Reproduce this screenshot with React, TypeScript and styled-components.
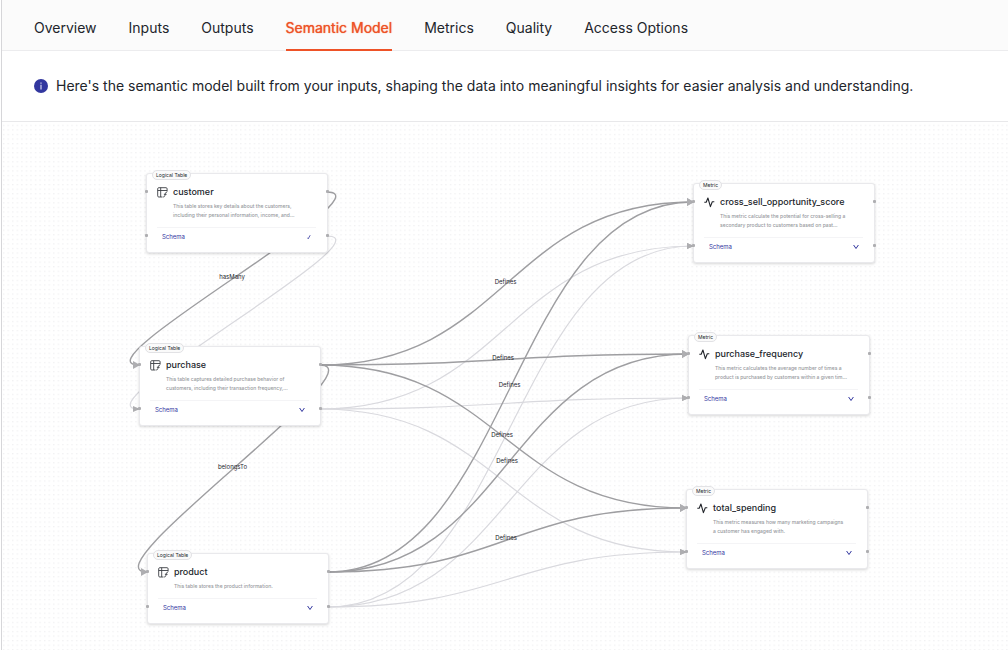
import React from "react";
import styled, { createGlobalStyle } from "styled-components";

const GlobalStyle = createGlobalStyle`
  *, *::before, *::after { box-sizing: border-box; }
  body {
    margin: 0;
    background: #fff;
    color: #22252b;
    font-family: Inter, "Liberation Sans", sans-serif;
  }
`;

const Page = styled.main`
  display: flex;
  flex-direction: column;
  min-height: 100vh;
  margin-left: 1px;
  border-left: 1px solid #d6d6d9;
`;

const TabBar = styled.nav`
  display: flex;
  gap: 32px;
  height: 51px;
  padding: 0 32px;
  background: #fbfbfb;
  border-bottom: 1px solid #ececee;
`;

const Tab = styled.a<{ $active?: boolean }>`
  display: flex;
  align-items: center;
  height: 51px;
  padding-top: 6px;
  border-bottom: 2px solid ${(p) => (p.$active ? "#ee5227" : "transparent")};
  color: ${(p) => (p.$active ? "#ee5227" : "#22252b")};
  font-size: 14px;
  line-height: 20px;
  text-decoration: none;
  text-shadow: ${(p) => (p.$active ? "0 0 1px currentColor" : "none")};
  white-space: nowrap;
`;

const Notice = styled.div`
  display: flex;
  align-items: center;
  gap: 8px;
  height: 71px;
  padding: 0 32px;
  border-bottom: 1px solid #e8e8ea;
  font-size: 14px;
  line-height: 20px;
`;

const NoticeText = styled.p`
  margin: 0;
`;

const Canvas = styled.section`
  position: relative;
  flex: 1;
  min-height: 528px;
  overflow: hidden;
`;

const Edges = styled.svg`
  position: absolute;
  top: 0;
  left: 0;
  width: 100%;
  height: 100%;
  fill: none;
`;

const EdgeText = styled.text`
  fill: #22252b;
  font-size: 6px;
  text-anchor: middle;
`;

const Card = styled.article`
  position: absolute;
  width: 182px;
  padding: 11px 10px 7px;
  background: #fff;
  border: 1px solid #e9e9ec;
  border-radius: 3px;
  box-shadow: 0 1px 3px rgba(0, 0, 0, 0.16);
`;

const Badge = styled.span`
  position: absolute;
  top: -4px;
  left: 5px;
  padding: 0 3px;
  background: #fafafa;
  border: 1px solid #e2e2e5;
  border-radius: 5px;
  color: #22252b;
  font-size: 5px;
  line-height: 8px;
  white-space: nowrap;
`;

const CardHeader = styled.header`
  display: flex;
  align-items: center;
  gap: 5px;
  height: 14px;
`;

const Title = styled.h2`
  margin: 0;
  font-size: 9px;
  font-weight: 500;
  line-height: 14px;
`;

const Description = styled.p`
  margin: 3px 0 7px 16px;
  color: #96989d;
  font-size: 5px;
  font-weight: 500;
  line-height: 9px;
  white-space: nowrap;
`;

const SchemaButton = styled.button`
  display: flex;
  align-items: center;
  justify-content: space-between;
  width: 159px;
  height: 18px;
  padding: 0 4px 0 5px;
  background: none;
  border: 0;
  border-top: 1px solid #f4f4f6;
  color: #32379f;
  font: inherit;
  font-size: 6px;
  line-height: 8px;
`;

const Handle = styled.i<{ $side: "left" | "right"; $row: "title" | "schema" }>`
  position: absolute;
  ${(p) => p.$side}: -2px;
  ${(p) => (p.$row === "title" ? "top: 16px" : "bottom: 15px")};
  width: 3px;
  height: 3px;
  background: #aeaeb1;
  border-radius: 1px;
`;

const InfoIcon = () => (
  <svg width="14" height="14" viewBox="0 0 14 14" aria-hidden="true">
    <circle cx="7" cy="7" r="7" fill="#32379f" />
    <path d="M7 5.800v4.700M7 3.500v1.300" stroke="#d5d6ee" strokeWidth="1.2" />
  </svg>
);

const TableIcon = () => (
  <svg width="11" height="11" viewBox="0 0 11 11" fill="none" stroke="#3b3e44" strokeWidth="0.9" aria-hidden="true">
    <path d="M5.500 10H1.800A1.100 1.100 0 0 1 .700 8.900V1.800A1.100 1.100 0 0 1 1.800.700H9A1.100 1.100 0 0 1 10.100 1.800V4.600M.700 3.500H10.100M3.700.700V10" />
    <path d="M9.900 5.400C8.600 5 8.400 6 8.200 7.200S7.600 10.300 6.200 10M6.900 7.300H9.600" />
  </svg>
);

const PulseIcon = () => (
  <svg width="11" height="11" viewBox="0 0 11 11" fill="none" stroke="#22252b" strokeWidth="1.1" strokeLinejoin="round" aria-hidden="true">
    <path d="M.300 5.200H2.200L3.900 1L6.400 9.600L8.300 4.800H10.300" />
  </svg>
);

const Chevron = () => (
  <svg width="6" height="6" viewBox="0 0 6 6" fill="none" stroke="#32379f" strokeWidth="1" aria-hidden="true">
    <path d="M.600 1L3 4.500L5.400 1" />
  </svg>
);

const Tick = () => (
  <svg width="6" height="6" viewBox="0 0 6 6" fill="none" stroke="#32379f" strokeWidth="0.8" aria-hidden="true">
    <path d="M1.600 3.800L2.200 4.800L4.200 1.200" />
  </svg>
);

type Kind = "Logical Table" | "Metric";
interface NodeData {
  id: string;
  kind: Kind;
  x: number;
  y: number;
  lines: string[];
  ticked?: boolean;
}

const nodes: NodeData[] = [
  { id: "customer", kind: "Logical Table", x: 144, y: 51, ticked: true, lines: ["This table stores key details about the customers,", "including their personal information, income, and..."] },
  { id: "purchase", kind: "Logical Table", x: 137, y: 224, lines: ["This table captures detailed purchase behavior of", "customers, including their transaction frequency,..."] },
  { id: "product", kind: "Logical Table", x: 145, y: 431, lines: ["This table stores the product information."] },
  { id: "cross_sell_opportunity_score", kind: "Metric", x: 691, y: 61, lines: ["This metric calculate the potential for cross-selling a", "secondary product to customers based on past..."] },
  { id: "purchase_frequency", kind: "Metric", x: 686, y: 213, lines: ["This metric calculates the average number of times a", "product is purchased by customers within a given tim..."] },
  { id: "total_spending", kind: "Metric", x: 684, y: 367, lines: ["This metric measures how many marketing campaigns", "a customer has engaged with."] },
];

const links = [
  { from: "customer", to: "purchase", label: "hasMany" },
  { from: "purchase", to: "product", label: "belongsTo", schema: false },
  { from: "purchase", to: "cross_sell_opportunity_score", label: "Defines" },
  { from: "purchase", to: "purchase_frequency", label: "Defines" },
  { from: "purchase", to: "total_spending", label: "Defines" },
  { from: "product", to: "cross_sell_opportunity_score", label: "Defines" },
  { from: "product", to: "purchase_frequency", label: "Defines" },
  { from: "product", to: "total_spending", label: "Defines" },
];

const CARD_WIDTH = 182;
const ZOOM = 0.57;

const find = (id: string) => nodes.find((n) => n.id === id)!;
const schemaY = (n: NodeData) => n.y + 45 + n.lines.length * 9;
const titleY = (n: NodeData) => n.y + 19;

function curve(x1: number, y1: number, x2: number, y2: number) {
  const dx = x2 - x1;
  const pull = dx >= 0 ? dx / 2 : 6.25 * Math.sqrt(-dx * ZOOM);
  return `M${x1} ${y1}C${x1 + pull} ${y1} ${x2 - pull} ${y2} ${x2} ${y2}`;
}

const Arrow = ({ x, y, small }: { x: number; y: number; small?: boolean }) => {
  const h = small ? 3 : 4;
  return <path d={`M${x - 6} ${y - h}L${x + 1} ${y}L${x - 6} ${y + h}Z`} fill="#aeaeb1" />;
};

function EdgeLayer() {
  const ends = links.map((l) => {
    const a = find(l.from);
    const b = find(l.to);
    return { ...l, a, b, x1: a.x + CARD_WIDTH - 1, x2: b.x };
  });
  return (
    <Edges aria-hidden="true">
      <defs>
        <pattern id="dots" width="8" height="8" patternUnits="userSpaceOnUse" patternTransform={`scale(${ZOOM})`}>
          <circle cx="3" cy="6" r="0.9" fill="#dcdcdf" />
        </pattern>
      </defs>
      <rect width="100%" height="100%" fill="url(#dots)" />
      {ends.filter((e) => e.schema !== false).map((e) => (
        <g key={`s-${e.from}-${e.to}`}>
          <path d={curve(e.x1, schemaY(e.a), e.x2, schemaY(e.b))} stroke="#d9d9de" strokeWidth="1.2" />
          <Arrow x={e.x2} y={schemaY(e.b)} small />
        </g>
      ))}
      {ends.map((e) => (
        <g key={`t-${e.from}-${e.to}`}>
          <path d={curve(e.x1, titleY(e.a), e.x2, titleY(e.b))} stroke="#9e9ea1" strokeWidth="1.4" />
          <Arrow x={e.x2} y={titleY(e.b)} />
        </g>
      ))}
      {ends.map((e) => (
        <EdgeText key={`l-${e.from}-${e.to}`} x={(e.x1 + e.x2) / 2 - 1} y={(titleY(e.a) + titleY(e.b)) / 2}>
          {e.label}
        </EdgeText>
      ))}
    </Edges>
  );
}

function NodeCard({ node }: { node: NodeData }) {
  return (
    <Card style={{ left: node.x, top: node.y }}>
      <Badge>{node.kind}</Badge>
      <CardHeader>
        {node.kind === "Metric" ? <PulseIcon /> : <TableIcon />}
        <Title>{node.id}</Title>
      </CardHeader>
      <Description>
        {node.lines.map((line, i) => (
          <React.Fragment key={line}>
            {i > 0 && <br />}
            {line}
          </React.Fragment>
        ))}
      </Description>
      <SchemaButton type="button">
        Schema
        {node.ticked ? <Tick /> : <Chevron />}
      </SchemaButton>
      <Handle $side="left" $row="title" />
      <Handle $side="right" $row="title" />
      <Handle $side="left" $row="schema" />
      <Handle $side="right" $row="schema" />
    </Card>
  );
}

const tabs = ["Overview", "Inputs", "Outputs", "Semantic Model", "Metrics", "Quality", "Access Options"];

export default function App() {
  return (
    <Page>
      <GlobalStyle />
      <TabBar>
        {tabs.map((tab) => (
          <Tab key={tab} href="#" $active={tab === "Semantic Model"}>
            {tab}
          </Tab>
        ))}
      </TabBar>
      <Notice>
        <InfoIcon />
        <NoticeText>
          Here's the semantic model built from your inputs, shaping the data into meaningful insights for easier analysis and understanding.
        </NoticeText>
      </Notice>
      <Canvas>
        <EdgeLayer />
        {nodes.map((node) => (
          <NodeCard key={node.id} node={node} />
        ))}
      </Canvas>
    </Page>
  );
}
